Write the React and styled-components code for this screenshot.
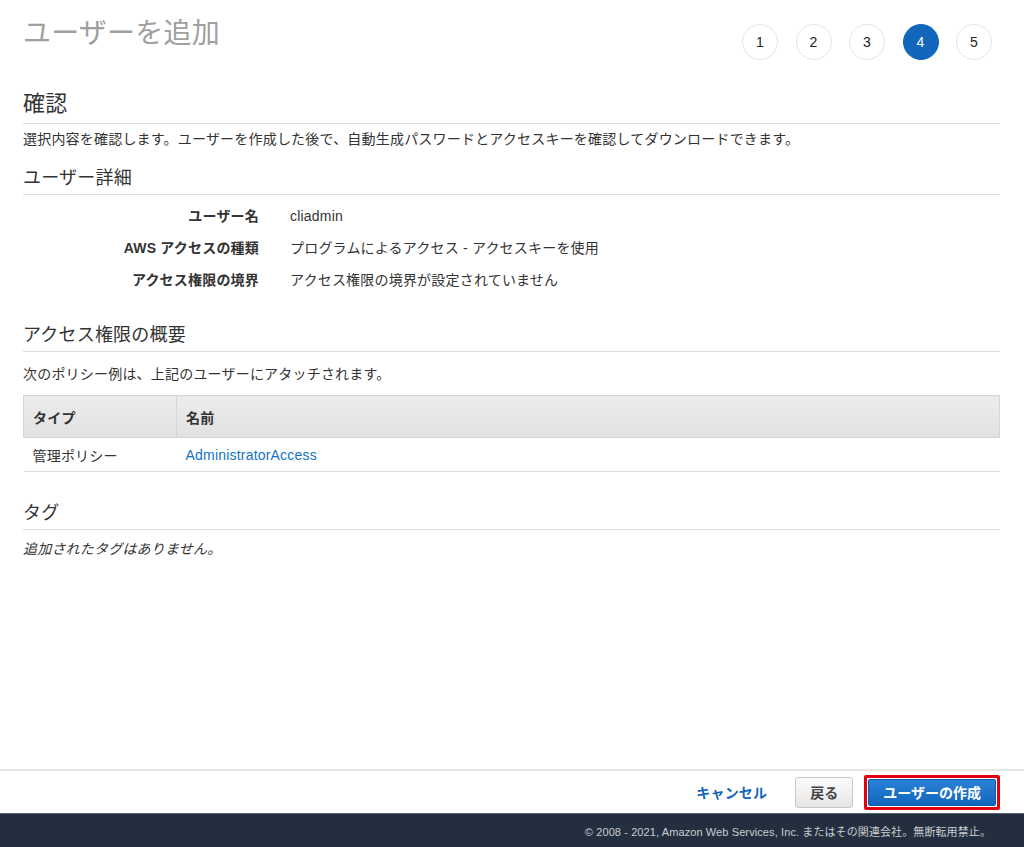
import styled, { createGlobalStyle } from "styled-components";

const GlobalStyle = createGlobalStyle`
	html, body {
		margin: 0;
		padding: 0;
		background: #fff;
	}
	body {
		font-family: "Liberation Sans", "Noto Sans CJK JP", sans-serif;
		font-size: 14px;
		letter-spacing: 0.2px;
		color: #333;
	}
`

const Page = styled.div`
	display: flex;
	flex-direction: column;
	min-height: 100vh;
`

const Main = styled.div`
	flex: 1;
	padding: 0 24px 0 23px;
`

const Header = styled.div`
	display: flex;
	justify-content: space-between;
	align-items: flex-start;
`

const Title = styled.h1`
	margin: 17px 0 0;
	font-size: 28px;
	line-height: 34px;
	font-weight: 400;
	color: #a0a0a0;
`

const Steps = styled.div`
	display: flex;
	gap: 17.5px;
	margin: 24px 8px 0 0;
`

const Step = styled.div`
	width: 34px;
	height: 34px;
	border-radius: 50%;
	display: flex;
	align-items: center;
	justify-content: center;
	font-size: 14px;
	letter-spacing: 0;
	border: 1px solid ${props => props.active ? "#1166bb" : "#e4e4e4"};
	background: ${props => props.active ? "#1166bb" : "#fff"};
	color: ${props => props.active ? "#fff" : "#222"};
`

const Heading = styled.h2`
	margin: ${props => props.top}px 0 0;
	padding-bottom: ${props => props.big ? 6 : 4}px;
	font-size: ${props => props.big ? 22 : 18}px;
	line-height: ${props => props.big ? 26 : 24}px;
	font-weight: 400;
	color: #333;
	border-bottom: 1px solid #dcdcdc;
`

const Text = styled.p`
	margin: ${props => props.top}px 0 0;
	line-height: 20px;
	font-style: ${props => props.italic ? "italic" : "normal"};
	color: #333;
`

const Details = styled.div`
	margin-top: 5px;
	display: grid;
	grid-template-columns: 236px 1fr;
	column-gap: 31px;
`

const Label = styled.div`
	padding: 6px 0;
	line-height: 20px;
	text-align: right;
	font-weight: 700;
	color: #333;
`

const Value = styled.div`
	padding: 6px 0;
	line-height: 20px;
	color: #333;
`

const Table = styled.table`
	margin-top: 11px;
	width: 100%;
	border-collapse: collapse;
`

const Th = styled.th`
	height: 41px;
	padding: 0 9px;
	text-align: left;
	font-weight: 700;
	color: #333;
	background: linear-gradient(#ececec, #e1e1e1);
	border: 1px solid #d5d5d5;
	border-left-color: ${props => props.first ? "#d5d5d5" : "#e8e8e8"};
	width: ${props => props.width || "auto"};
`

const Td = styled.td`
	height: 33px;
	padding: 0 9px;
	border-bottom: 1px solid #dcdcdc;
	color: #333;
`

const Link = styled.a`
	color: #1473c0;
	text-decoration: none;
`

const ActionBar = styled.div`
	border-top: 2px solid #e6e6e6;
	height: 42px;
	display: flex;
	align-items: center;
	justify-content: flex-end;
	padding-right: 24px;
`

const Cancel = styled.a`
	font-weight: 700;
	color: #1166bb;
	margin-right: 28px;
`

const BackButton = styled.button`
	height: 31px;
	padding: 0 14px;
	border: 1px solid #c8c8c8;
	border-radius: 3px;
	background: linear-gradient(#fcfcfc, #e6e6e6);
	font-family: inherit;
	font-size: 14px;
	font-weight: 700;
	color: #444;
	margin-right: 11px;
`

const Highlight = styled.div`
	border: 3px solid #e00012;
	border-radius: 2px;
	padding: 1px;
	display: flex;
`

const PrimaryButton = styled.button`
	height: 27px;
	padding: 0 14px;
	border: 1px solid #0b5aa6;
	border-radius: 2px;
	background: linear-gradient(#2a82d8, #1166bb);
	font-family: inherit;
	font-size: 14px;
	font-weight: 700;
	color: #fff;
`

const Footer = styled.div`
	height: 33px;
	border-top: 1px solid #56606c;
	background: #232f3e;
	display: flex;
	align-items: center;
	justify-content: flex-end;
	padding-right: 33px;
	font-size: 11px;
	letter-spacing: 0.1px;
	color: #c9ced3;
`

const steps = [1, 2, 3, 4, 5]

const details = [
	{ label: "ユーザー名", value: "cliadmin" },
	{ label: "AWS アクセスの種類", value: "プログラムによるアクセス - アクセスキーを使用" },
	{ label: "アクセス権限の境界", value: "アクセス権限の境界が設定されていません" },
]

export default function App() {
	return (
		<Page>
			<GlobalStyle />
			<Main>
				<Header>
					<Title>ユーザーを追加</Title>
					<Steps>
						{steps.map(n => <Step key={n} active={n === 4}>{n}</Step>)}
					</Steps>
				</Header>

				<Heading big top={31}>確認</Heading>
				<Text top={5}>選択内容を確認します。ユーザーを作成した後で、自動生成パスワードとアクセスキーを確認してダウンロードできます。</Text>

				<Heading top={17}>ユーザー詳細</Heading>
				<Details>
					{details.map(d => [
						<Label key={d.label + "-l"}>{d.label}</Label>,
						<Value key={d.label + "-v"}>{d.value}</Value>
					])}
				</Details>

				<Heading top={27}>アクセス権限の概要</Heading>
				<Text top={12}>次のポリシー例は、上記のユーザーにアタッチされます。</Text>
				<Table>
					<thead>
						<tr>
							<Th first width="134px">タイプ</Th>
							<Th>名前</Th>
						</tr>
					</thead>
					<tbody>
						<tr>
							<Td>管理ポリシー</Td>
							<Td><Link href="#">AdministratorAccess</Link></Td>
						</tr>
					</tbody>
				</Table>

				<Heading top={29}>タグ</Heading>
				<Text italic top={9}>追加されたタグはありません。</Text>
			</Main>

			<ActionBar>
				<Cancel>キャンセル</Cancel>
				<BackButton>戻る</BackButton>
				<Highlight>
					<PrimaryButton>ユーザーの作成</PrimaryButton>
				</Highlight>
			</ActionBar>
			<Footer>© 2008 - 2021, Amazon Web Services, Inc. またはその関連会社。無断転用禁止。</Footer>
		</Page>
	)
}
